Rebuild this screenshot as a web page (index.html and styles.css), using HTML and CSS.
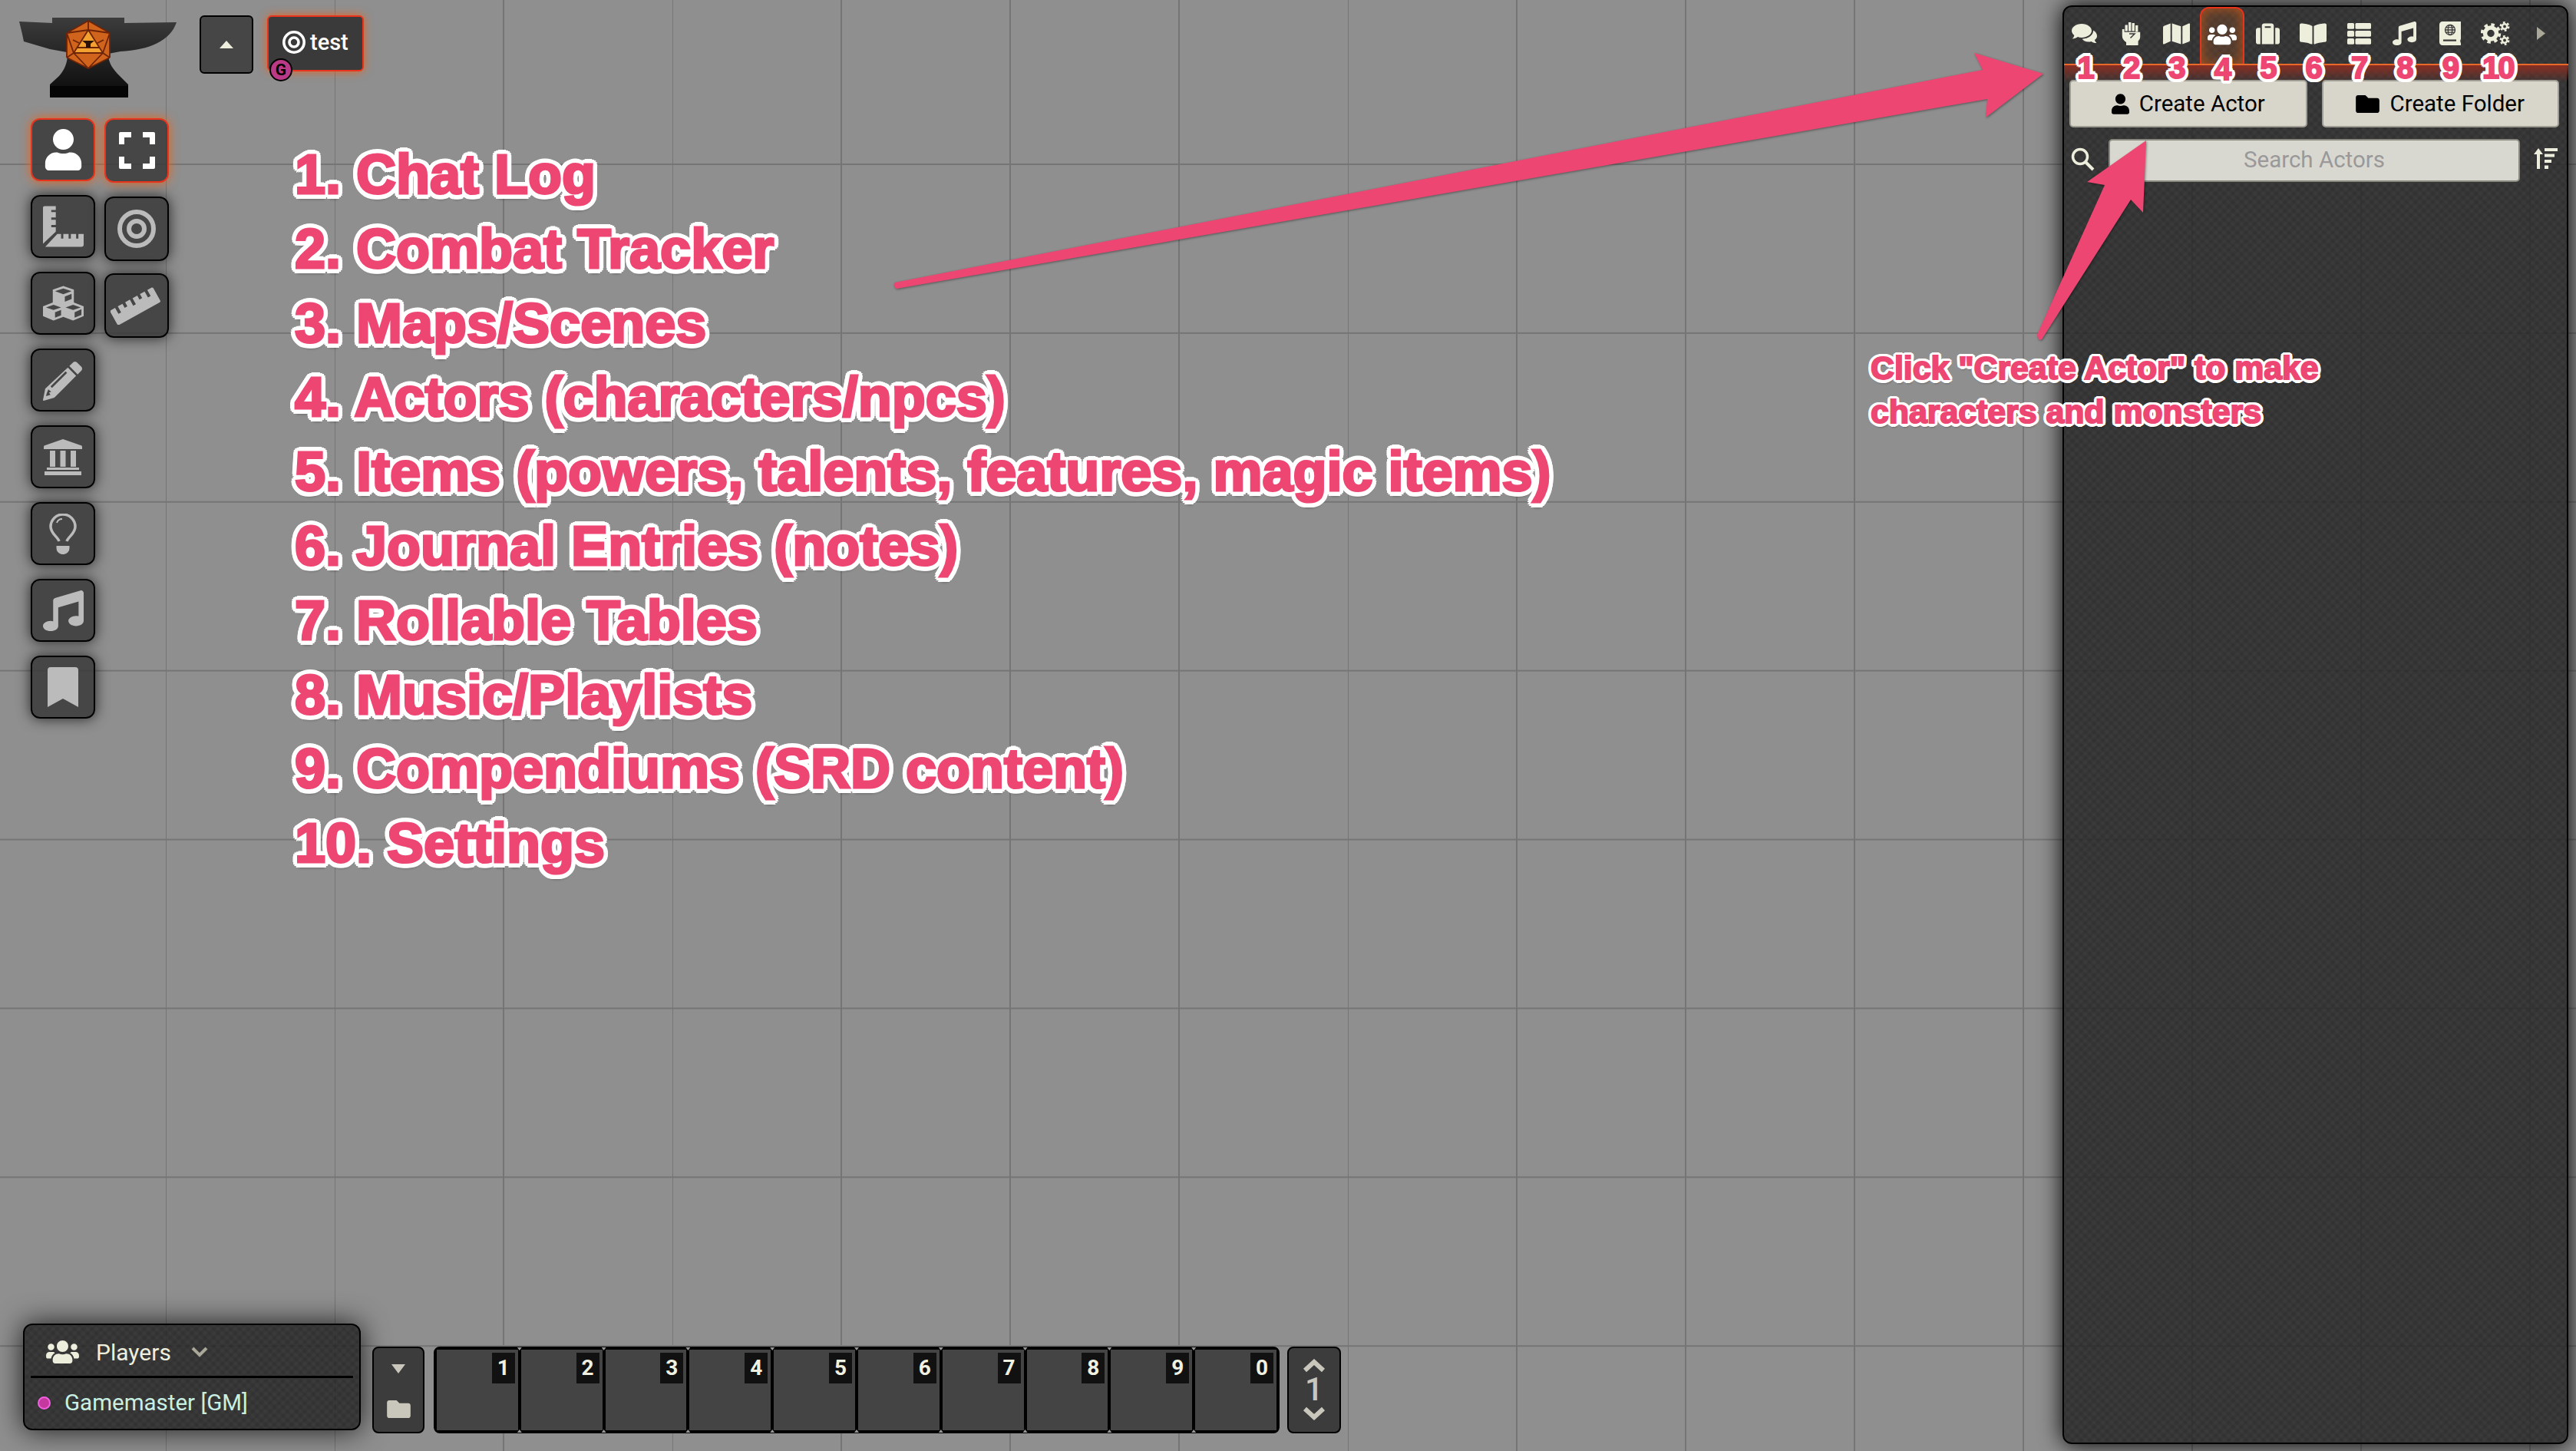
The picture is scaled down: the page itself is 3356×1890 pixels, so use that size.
FILE: index.html
```html
<!DOCTYPE html>
<html lang="en">

<head>
    <meta charset="UTF-8">
    <title>Foundry VTT - sidebar guide</title>
    <link rel="stylesheet" href="styles.css">
</head>

<body>

    <svg class="sprite" width="0" height="0">
        <symbol id="i-user" viewBox="0 0 448 512"><path d="M224 256c70.7 0 128-57.3 128-128S294.7 0 224 0 96 57.3 96 128s57.3 128 128 128zm89.6 32h-16.7c-22.2 10.2-46.9 16-72.9 16s-50.6-5.8-72.9-16h-16.7C60.2 288 0 348.2 0 422.4V464c0 26.5 21.5 48 48 48h352c26.5 0 48-21.5 48-48v-41.6c0-74.2-60.2-134.4-134.4-134.4z"/></symbol>
        <symbol id="i-folder" viewBox="0 64 512 384"><path d="M464 128H272l-64-64H48C21.49 64 0 85.49 0 112v288c0 26.51 21.49 48 48 48h416c26.51 0 48-21.49 48-48V176c0-26.51-21.49-48-48-48z"/></symbol>
        <symbol id="i-users" viewBox="0 32 640 448"><path d="M96 224c35.3 0 64-28.7 64-64s-28.7-64-64-64-64 28.7-64 64 28.7 64 64 64zm448 0c35.3 0 64-28.7 64-64s-28.7-64-64-64-64 28.7-64 64 28.7 64 64 64zm32 32h-64c-17.6 0-33.5 7.1-45.1 18.6 40.3 22.1 68.9 62 75.1 109.4h66c17.7 0 32-14.3 32-32v-32c0-35.3-28.7-64-64-64zm-256 0c61.9 0 112-50.1 112-112S381.9 32 320 32 208 82.1 208 144s50.1 112 112 112zm76.8 32h-8.3c-20.8 10-43.9 16-68.5 16s-47.6-6-68.5-16h-8.3C179.6 288 128 339.6 128 403.2V432c0 26.5 21.5 48 48 48h288c26.5 0 48-21.5 48-48v-28.8c0-63.6-51.6-115.2-115.2-115.2zm-223.7-13.4C161.5 263.1 145.6 256 128 256H64c-35.3 0-64 28.7-64 64v32c0 17.7 14.3 32 32 32h65.9c6.3-47.4 34.9-87.3 75.2-109.4z"/></symbol>
        <symbol id="i-music" viewBox="0 0 512 512"><path d="M470.38 1.51L150.41 96A32 32 0 0 0 128 126.51v261.41A139 139 0 0 0 96 384c-53 0-96 28.66-96 64s43 64 96 64 96-28.66 96-64V214.32l256-75v184.61a138.4 138.4 0 0 0-32-3.93c-53 0-96 28.66-96 64s43 64 96 64 96-28.65 96-64V32a32 32 0 0 0-41.62-30.49z"/></symbol>
        <symbol id="i-map" viewBox="0 32 576 448"><path d="M0 117.66v346.32c0 11.32 11.43 19.06 21.94 14.86L160 416V32L20.12 87.95A32.006 32.006 0 0 0 0 117.66zM192 416l192 64V96L192 32v384zM554.06 33.16L416 96v384l139.88-55.95A31.996 31.996 0 0 0 576 394.34V48.02c0-11.32-11.43-19.06-21.94-14.86z"/></symbol>
        <symbol id="i-suitcase" viewBox="0 32 512 448"><path d="M128 480h256V80c0-26.5-21.5-48-48-48H176c-26.5 0-48 21.5-48 48v400zm64-384h128v32H192V96zm320 80v256c0 26.5-21.5 48-48 48h-48V128h48c26.5 0 48 21.5 48 48zM96 480H48c-26.5 0-48-21.5-48-48V176c0-26.5 21.5-48 48-48h48v352z"/></symbol>
        <symbol id="i-book" viewBox="0 32 576 448"><path d="M542.22 32.05c-54.8 3.11-163.72 14.43-230.96 55.59-4.64 2.84-7.27 7.89-7.27 13.17v363.87c0 11.55 12.63 18.85 23.28 13.49 69.18-34.82 169.23-44.32 218.7-46.92 16.89-.89 30.02-14.43 30.02-30.66V62.75c.01-17.71-15.35-31.74-33.77-30.7zM264.73 87.64C197.5 46.48 88.58 35.17 33.78 32.05 15.36 31.01 0 45.04 0 62.75V400.6c0 16.24 13.13 29.78 30.02 30.66 49.49 2.6 149.59 12.11 218.77 46.95 10.62 5.35 23.21-1.94 23.21-13.46V100.63c0-5.29-2.62-10.14-7.27-12.99z"/></symbol>
        <symbol id="i-chat" viewBox="0 0 35 26">
            <path d="M13 0C6 0 0 4 0 9c0 2.400 1.300 4.500 3.300 6C3 17 1.800 18.500 .6 19.500c3 0 5.500-1 7.300-2.500 1.500.6 3.300.9 5.100.9 7 0 13-4 13-8.900S20 0 13 0z"/>
            <path d="M28 8.800c.3 6-6.500 10.700-14.400 10.900 1.500 2.300 4.700 3.800 8.400 3.800 1.300 0 2.500-.2 3.700-.6 1.700 1.400 3.900 2.200 6.700 2.100-1.200-1-2.100-2.400-2.500-3.900 2-1.400 3.100-3.200 3.100-5.200 0-3-1.800-5.500-4.800-7.100z"/>
        </symbol>
        <symbol id="i-fist" viewBox="0 0 25 31">
            <path d="M4.500 4.500h3.400v8H4.500zM9 1h3.400v11.500H9zM13.500 2h3.400v10.500h-3.400zM18 5h3.400v8.500H18z"/>
            <path d="M.8 10h2.800v3.800h20.600v6c0 2.500-1 4.200-2.600 5.700V31H6v-4C3 25 .8 22.500 .8 19z"/>
            <path d="M10 16h7l-5.500 5.500" fill="none" stroke="#383838" stroke-width="1.500"/>
        </symbol>
        <symbol id="i-list" viewBox="0 0 31 28">
            <rect x="0" y="0" width="9" height="7.800" rx="1.500"/><rect x="10.500" y="0" width="20.500" height="7.800" rx="1.500"/>
            <rect x="0" y="10" width="9" height="7.800" rx="1.500"/><rect x="10.500" y="10" width="20.500" height="7.800" rx="1.500"/>
            <rect x="0" y="20" width="9" height="7.800" rx="1.500"/><rect x="10.500" y="20" width="20.500" height="7.800" rx="1.500"/>
        </symbol>
        <symbol id="i-atlas" viewBox="0 0 28 31">
            <path d="M4 0h24v23c-1 .6-1 4 0 5v3H4c-2.200 0-4-1.800-4-4V4c0-2.200 1.800-4 4-4z"/>
            <g fill="none" stroke="#383838" stroke-width="1.300"><circle cx="14" cy="11" r="6.500"/><ellipse cx="14" cy="11" rx="2.700" ry="6.500"/><path d="M7.500 11h13M8.500 7.800h11M8.500 14.200h11"/></g>
            <rect x="5" y="23.500" width="17" height="2.200" fill="#383838"/>
        </symbol>
        <symbol id="i-cogs" viewBox="0 0 39 31">
            <g fill="none" stroke="currentColor">
                <circle cx="13" cy="15.500" r="7.500" stroke-width="5.500"/>
                <circle cx="13" cy="15.500" r="11" stroke-width="4.500" stroke-dasharray="4.320 4.320"/>
                <circle cx="31" cy="6.500" r="3.200" stroke-width="2.600"/>
                <circle cx="31" cy="6.500" r="5.300" stroke-width="2.400" stroke-dasharray="2.770 2.780"/>
                <circle cx="31" cy="24.500" r="3.200" stroke-width="2.600"/>
                <circle cx="31" cy="24.500" r="5.300" stroke-width="2.400" stroke-dasharray="2.770 2.780"/>
            </g>
        </symbol>
        <symbol id="i-bullseye" viewBox="0 0 50 50">
            <circle cx="25" cy="25" r="22" fill="none" stroke="currentColor" stroke-width="6"/>
            <circle cx="25" cy="25" r="10" fill="none" stroke="currentColor" stroke-width="6"/>
        </symbol>
        <symbol id="i-expand" viewBox="0 0 47 48">
            <path d="M0 2a2 2 0 0 1 2-2h14v7H7v9H0zM47 2a2 2 0 0 0-2-2H31v7h9v9h7zM0 46a2 2 0 0 0 2 2h14v-7H7v-9H0zM47 46a2 2 0 0 1-2 2H31v-7h9v-9h7z"/>
        </symbol>
        <symbol id="i-square" viewBox="0 0 54 54">
            <path d="M2 0h15v5h-6v3h6v7h-6v3h6v7h-6v3h6v6L0 50V2a2 2 0 0 1 2-2z"/>
            <path d="M19 37h5v6h3v-6h7v6h3v-6h7v6h3v-6h7v14a3 3 0 0 1-3 3H3z"/>
        </symbol>
        <symbol id="i-cubes" viewBox="0 0 54 46">
            <path d="M27 0l14 5v17l13 5v13l-14 6-13-5-13 5-14-6V27l13-5V5z"/>
            <g fill="#464646">
                <path d="M27 3.500L16 7l11 4 11-4zM29 14v7l9-3.500v-7zM14 25l-10 3.500 10 3.500 10-3.500zM40 25l-10 3.500 10 3.500 10-3.500zM16 35v7l8-3v-7zM42 35v7l9-3.500V31z"/>
            </g>
        </symbol>
        <symbol id="i-ruler" viewBox="0 0 68 50">
            <g transform="rotate(-29 34 25)"><path d="M2 14h6v9h4v-9h7v6h4v-6h7v9h4v-9h7v6h4v-6h7v9h4v-9h6a2 2 0 0 1 2 2v18a2 2 0 0 1-2 2H2a2 2 0 0 1-2-2V16a2 2 0 0 1 2-2z"/></g>
        </symbol>
        <symbol id="i-pencil" viewBox="0 0 54 54">
            <path d="M40 3a4 4 0 0 1 5 0l6 6a4 4 0 0 1 0 5l-5 5-11-11z"/>
            <path d="M33 10l11 11-29 29-14 4c-1 0-1-1-1-1l3-15zM30 15L10 35l2 2 20-20zM5 44l2-5 4 3-3 1 2 3-6 2z" fill-rule="evenodd"/>
        </symbol>
        <symbol id="i-landmark" viewBox="0 0 50 47">
            <path d="M25 0l23 8a2 2 0 0 1 2 2v3H0v-3a2 2 0 0 1 2-2z"/>
            <path d="M8 15h7v21H8zM21.500 15h7v21h-7zM35 15h7v21h-7zM4 37h42v3H4zM1 42h48v5H1z"/>
        </symbol>
        <symbol id="i-bulb" viewBox="0 0 36 53">
            <path d="M13 36C11 30 2 26 2 17a16 16 0 0 1 32 0c0 9-9 13-11 19" fill="none" stroke="currentColor" stroke-width="3.500"/>
            <path d="M17 7c-3 0-6 2-7 5" fill="none" stroke="currentColor" stroke-width="2"/>
            <path d="M9.500 42h17v3a8 8 0 0 1-7 8h-3a8 8 0 0 1-7-8z"/>
        </symbol>
        <symbol id="i-bookmark" viewBox="0 0 40 52">
            <path d="M4 0h32a4 4 0 0 1 4 4v48L20 41 0 52V4a4 4 0 0 1 4-4z"/>
        </symbol>
        <symbol id="i-sort" viewBox="0 0 31 27">
            <path d="M6 0l6 8H8v19H4V8H0zM14 0h17v4H14zM14 7.500h13v4H14zM14 15h9v4h-9zM14 22.500h5V27h-5z"/>
        </symbol>
    </svg>

    <svg class="logo" width="205" height="105" viewBox="0 0 205 105">
        <defs>
            <linearGradient id="anvil" x1="0" y1="0" x2="0" y2="1">
                <stop offset="0" stop-color="#3c3c3c"/>
                <stop offset="1" stop-color="#0a0a0a"/>
            </linearGradient>
        </defs>
        <path d="M0 6l43 2V1h94v7l68-1c-8 24-35 36-73 38l-16 3c0 12 6 20 15 29l11 11v17H40V88l12-11c7-8 11-17 11-29l-1-2L40 42 6 32C4 22 2 14 0 6z" fill="url(#anvil)"/>
        <rect x="40" y="90" width="102" height="15" fill="#050505"/>
        <path d="M90 5l28 16v32L90 67 62 53V21z" fill="#d0641c"/>
        <path d="M90 17l19 30H71z" fill="#f2a030"/>
        <path d="M90 5v12M62 21l9 26M118 21l-9 26M62 53l9-6M118 53l-9-6M90 67l-19-20M90 67l19-20M62 21l28-4 28 4M90 5L62 21M90 5l28 16M62 53l28 14 28-14M118 21v32M62 21v32M71 47l19-30 19 30zM76 40h28M70 30l8 4M110 30l-8 4" stroke="#6e2408" stroke-width="1.800" fill="none"/>
        <path d="M82 31h16l-5 4v5h-6v-5z" fill="#2c1206"/>
    </svg>

    <nav class="navigation">
        <button class="nav-toggle"><svg width="18" height="10" viewBox="0 0 18 10"><path d="M9 0l9 10H0z"/></svg></button>
        <div class="scene-tab">
            <svg class="scene-icon" width="30" height="30"><use href="#i-bullseye"/></svg>
            <span>test</span>
            <span class="gm-badge">G</span>
        </div>
    </nav>

    <aside class="controls">
        <div class="tool-col">
            <div class="tool active"><svg width="53" height="54"><use href="#i-user"/></svg></div>
            <div class="tool"><svg width="53" height="54"><use href="#i-square"/></svg></div>
            <div class="tool"><svg width="53" height="46"><use href="#i-cubes"/></svg></div>
            <div class="tool"><svg width="53" height="53"><use href="#i-pencil"/></svg></div>
            <div class="tool"><svg width="50" height="47"><use href="#i-landmark"/></svg></div>
            <div class="tool"><svg width="36" height="53"><use href="#i-bulb"/></svg></div>
            <div class="tool"><svg width="53" height="53"><use href="#i-music"/></svg></div>
            <div class="tool"><svg width="40" height="52"><use href="#i-bookmark"/></svg></div>
        </div>
        <div class="tool-col second">
            <div class="tool active"><svg width="47" height="48"><use href="#i-expand"/></svg></div>
            <div class="tool"><svg width="50" height="50"><use href="#i-bullseye"/></svg></div>
            <div class="tool"><svg width="68" height="50"><use href="#i-ruler"/></svg></div>
        </div>
    </aside>

    <section class="players">
        <h3 class="players-head">
            <svg class="users-icon" width="43" height="30"><use href="#i-users"/></svg>
            <span>Players</span>
            <svg class="chevron" width="22" height="14" viewBox="0 0 22 14"><path d="M2 2l9 9 9-9" fill="none" stroke="currentColor" stroke-width="4"/></svg>
        </h3>
        <div class="player">
            <span class="player-dot"></span>
            <span>Gamemaster [GM]</span>
        </div>
    </section>

    <section class="hotbar">
        <div class="macro-dir">
            <svg width="18" height="12" viewBox="0 0 18 12"><path d="M0 0h18l-9 12z"/></svg>
            <svg width="31" height="23"><use href="#i-folder"/></svg>
        </div>
        <ol class="macros">
            <li class="macro"><span class="macro-key">1</span></li>
            <li class="macro"><span class="macro-key">2</span></li>
            <li class="macro"><span class="macro-key">3</span></li>
            <li class="macro"><span class="macro-key">4</span></li>
            <li class="macro"><span class="macro-key">5</span></li>
            <li class="macro"><span class="macro-key">6</span></li>
            <li class="macro"><span class="macro-key">7</span></li>
            <li class="macro"><span class="macro-key">8</span></li>
            <li class="macro"><span class="macro-key">9</span></li>
            <li class="macro"><span class="macro-key">0</span></li>
        </ol>
        <div class="macro-page">
            <svg width="30" height="18" viewBox="0 0 30 18"><path d="M3 15L15 4l12 11" fill="none" stroke="currentColor" stroke-width="6"/></svg>
            <span>1</span>
            <svg width="30" height="18" viewBox="0 0 30 18"><path d="M3 3l12 11L27 3" fill="none" stroke="currentColor" stroke-width="6"/></svg>
        </div>
    </section>

    <aside class="sidebar">
        <nav class="tabs">
            <a class="tab"><svg width="35" height="26"><use href="#i-chat"/></svg><b class="tab-num">1</b></a>
            <a class="tab"><svg width="25" height="31"><use href="#i-fist"/></svg><b class="tab-num">2</b></a>
            <a class="tab"><svg width="35" height="28"><use href="#i-map"/></svg><b class="tab-num">3</b></a>
            <a class="tab active"><svg width="38" height="28"><use href="#i-users"/></svg><b class="tab-num">4</b></a>
            <a class="tab"><svg width="31" height="28"><use href="#i-suitcase"/></svg><b class="tab-num">5</b></a>
            <a class="tab"><svg width="35" height="28"><use href="#i-book"/></svg><b class="tab-num">6</b></a>
            <a class="tab"><svg width="31" height="28"><use href="#i-list"/></svg><b class="tab-num">7</b></a>
            <a class="tab"><svg width="31" height="31"><use href="#i-music"/></svg><b class="tab-num">8</b></a>
            <a class="tab"><svg width="28" height="31"><use href="#i-atlas"/></svg><b class="tab-num">9</b></a>
            <a class="tab"><svg width="39" height="31"><use href="#i-cogs"/></svg><b class="tab-num ten">10</b></a>
            <a class="tab collapse"><svg width="11" height="17" viewBox="0 0 11 17"><path d="M0 0l11 8.500L0 17z"/></svg></a>
        </nav>
        <div class="actions">
            <button class="action"><svg width="23" height="27"><use href="#i-user"/></svg>Create Actor</button>
            <button class="action"><svg width="31" height="23"><use href="#i-folder"/></svg>Create Folder</button>
        </div>
        <div class="search-row">
            <svg class="search-icon" width="32" height="32" viewBox="0 0 32 32"><circle cx="12" cy="12" r="9.500" fill="none" stroke="currentColor" stroke-width="3.500"/><path d="M19 19l10 10" stroke="currentColor" stroke-width="4"/></svg>
            <div class="search-box">Search Actors</div>
            <svg class="sort-icon" width="31" height="27"><use href="#i-sort"/></svg>
        </div>
    </aside>

    <!-- annotations drawn on top of the screenshot -->
    <svg class="arrows" width="3356" height="1890" viewBox="0 0 3356 1890">
        <path d="M1166 368L2583 91 2572 69 2662 96 2587 153 2589 129 1168 376Q1162 372 1166 368z"/>
        <path d="M2654 436L2742 241 2719 237 2796 183 2792 277 2776 260 2660 442Q2655 445 2654 436z"/>
    </svg>

    <ul class="guide">
        <li>1. Chat Log</li>
        <li>2. Combat Tracker</li>
        <li>3. Maps/Scenes</li>
        <li>4. Actors (characters/npcs)</li>
        <li>5. Items (powers, talents, features, magic items)</li>
        <li>6. Journal Entries (notes)</li>
        <li>7. Rollable Tables</li>
        <li>8. Music/Playlists</li>
        <li>9. Compendiums (SRD content)</li>
        <li>10. Settings</li>
    </ul>

    <p class="callout">Click "Create Actor" to make<br>characters and monsters</p>

</body>

</html>
```

FILE: styles.css
```css
* {
    box-sizing: border-box;
}

body {
    margin: 0;
    width: 3356px;
    height: 1890px;
    position: relative;
    overflow: hidden;
    font-family: Roboto, "Noto Sans", sans-serif;
    background-color: #8f8f8f;
    background-image:
        linear-gradient(#757575 2px, transparent 2px),
        linear-gradient(90deg, #757575 2px, transparent 2px);
    background-size: 220px 219.9px;
    background-position: 215px 213px;
}

svg {
    fill: currentColor;
    display: block;
}

.sprite {
    position: absolute;
}

.logo {
    position: absolute;
    left: 25px;
    top: 22px;
    filter: blur(0.5px);
}

/* top nav */
.navigation {
    position: absolute;
    left: 260px;
    top: 20px;
    display: flex;
    align-items: flex-start;
    gap: 18px;
}

.nav-toggle {
    width: 70px;
    height: 76px;
    padding: 0;
    display: flex;
    align-items: center;
    justify-content: center;
    background: #464646;
    border: 2px solid #000;
    border-radius: 6px;
    color: #eeeedd;
}

.scene-tab {
    position: relative;
    width: 126px;
    height: 73px;
    display: flex;
    align-items: center;
    gap: 6px;
    padding: 0 0 4px 18px;
    background: #3a3a3a;
    border: 2px solid #e8341c;
    border-radius: 6px;
    box-shadow: 0 0 12px #e8641c;
    color: #fff;
    font-size: 29px;
    font-weight: 500;
}

.gm-badge {
    position: absolute;
    left: 1px;
    top: 54px;
    width: 30px;
    height: 30px;
    border-radius: 50%;
    border: 2px solid #000;
    background: #bb3a88;
    color: #000;
    font-size: 21px;
    font-weight: 700;
    line-height: 26px;
    text-align: center;
}

/* left tools */
.controls {
    position: absolute;
    left: 40px;
    top: 154px;
    display: flex;
    gap: 12px;
}

.tool-col {
    display: flex;
    flex-direction: column;
    gap: 18px;
}

.tool {
    width: 84px;
    height: 82px;
    display: flex;
    align-items: center;
    justify-content: center;
    background: rgba(58, 58, 58, 0.85);
    border: 2px solid #000;
    border-radius: 12px;
    box-shadow: 0 0 18px rgba(0, 0, 0, 0.75);
    color: #bbb;
}

.tool.active {
    border-color: #e8341c;
    box-shadow: 0 0 14px #e8641c;
    color: #fff;
}

.second {
    gap: 16px;
}

.second .tool {
    height: 84px;
}

.second .tool.active {
    margin-bottom: 2px;
}

/* players */
.players {
    position: absolute;
    left: 30px;
    top: 1724px;
    width: 440px;
    height: 139px;
    padding: 0 8px;
    background-color: rgba(44, 44, 44, 0.85);
    background-image:
        repeating-linear-gradient(45deg, rgba(0, 0, 0, 0.07) 0 4px, transparent 4px 8px),
        repeating-linear-gradient(-45deg, rgba(0, 0, 0, 0.07) 0 4px, transparent 4px 8px);
    border: 2px solid #000;
    border-radius: 12px;
    box-shadow: 0 0 36px rgba(0, 0, 0, 0.8);
}

.players-head {
    margin: 0;
    height: 69px;
    display: flex;
    align-items: center;
    padding: 4px 0 0 20px;
    border-bottom: 3px solid #000;
    color: #eeeedd;
    font-size: 30px;
    font-weight: 400;
}

.users-icon {
    margin-right: 22px;
}

.chevron {
    margin-left: 26px;
    color: #aaa898;
}

.player {
    height: 64px;
    display: flex;
    align-items: center;
    gap: 18px;
    padding-left: 9px;
    color: #c8efe2;
    font-size: 29.500px;
}

.player-dot {
    width: 17px;
    height: 17px;
    border-radius: 50%;
    background: #c5399e;
    border: 2px solid #f060e0;
}

/* hotbar */
.hotbar {
    position: absolute;
    left: 485px;
    top: 1754px;
    height: 113px;
    display: flex;
    gap: 12px;
}

.macro-dir {
    width: 68px;
    display: flex;
    flex-direction: column;
    align-items: center;
    gap: 35px;
    padding-top: 21px;
    background: #3c3c3c;
    border: 2px solid #000;
    border-radius: 8px;
    color: #c9c7bc;
}

.macros {
    margin: 0;
    padding: 0;
    list-style: none;
    width: 1102px;
    display: flex;
    background: #000;
    border: 4px solid #000;
    border-radius: 8px;
}

.macro {
    position: relative;
    flex: 1;
    background: rgba(70, 70, 70, 0.97);
    border-right: 4px solid #000;
}

.macro:last-child {
    border-right: 0;
}

.macro:not(:last-child)::before,
.macro:not(:last-child)::after {
    content: "";
    position: absolute;
    right: -5px;
    width: 6px;
    height: 4px;
    background: #999;
}

.macro:not(:last-child)::before {
    top: -3px;
    clip-path: polygon(0 0, 100% 0, 50% 100%);
}

.macro:not(:last-child)::after {
    bottom: -3px;
    clip-path: polygon(50% 0, 100% 100%, 0 100%);
}

.macro-key {
    position: absolute;
    top: 4px;
    right: 4px;
    width: 30px;
    height: 40px;
    background: #111;
    color: #f0f0e0;
    font-size: 28px;
    font-weight: 700;
    line-height: 40px;
    text-align: center;
}

.macro-page {
    width: 70px;
    margin-left: -2px;
    display: flex;
    flex-direction: column;
    align-items: center;
    padding-top: 14px;
    background: #3c3c3c;
    border: 2px solid #000;
    border-radius: 8px;
    color: #c9c7bc;
}

.macro-page span {
    font-size: 42px;
    font-weight: 500;
    line-height: 44px;
}

/* sidebar */
.sidebar {
    position: absolute;
    left: 2687px;
    top: 7px;
    width: 659px;
    height: 1874px;
    background-color: rgba(44, 44, 44, 0.85);
    background-image:
        repeating-linear-gradient(45deg, rgba(0, 0, 0, 0.07) 0 4px, transparent 4px 8px),
        repeating-linear-gradient(-45deg, rgba(0, 0, 0, 0.07) 0 4px, transparent 4px 8px);
    border: 2px solid #000;
    border-radius: 12px;
    box-shadow: 0 0 30px #000;
}

.tabs {
    position: relative;
    height: 76px;
    margin-left: -2px;
    display: grid;
    grid-template-columns: repeat(11, 59.4px);
    color: #eeeedd;
}

.tabs::after {
    content: "";
    position: absolute;
    left: 2px;
    right: -2px;
    top: 74px;
    height: 22px;
    border-top: 2px solid #e8692a;
    background: linear-gradient(#8a2e22, rgba(138, 46, 34, 0));
}

.tab {
    position: relative;
    display: flex;
    align-items: center;
    justify-content: center;
    padding-bottom: 7px;
}

.tab.active {
    color: #fff;
    margin: 0 1px;
    border: 2px solid #e8341c;
    border-bottom: 0;
    border-radius: 12px 12px 0 0;
    box-shadow: inset 0 0 16px #b8561c;
    background: rgba(170, 85, 30, 0.25);
}

.tab.collapse {
    color: #aaa898;
}

.tab-num {
    position: absolute;
    top: 56px;
    left: 50%;
    transform: translateX(-50%);
    z-index: 2;
    color: #ee4672;
    font: 700 40px/46px "Liberation Sans", sans-serif;
    letter-spacing: -2px;
    -webkit-text-stroke: 2px #ee4672;
    text-shadow:
        5px 0 #fff, 4.600px 1.900px #fff, 3.500px 3.500px #fff, 1.900px 4.600px #fff,
        0 5px #fff, -1.900px 4.600px #fff, -3.500px 3.500px #fff, -4.600px 1.900px #fff,
        -5px 0 #fff, -4.600px -1.900px #fff, -3.500px -3.500px #fff, -1.900px -4.600px #fff,
        0 -5px #fff, 1.900px -4.600px #fff, 3.500px -3.500px #fff, 4.600px -1.900px #fff;
}

.tab-num.ten {
    margin-left: 3px;
}

.actions {
    position: relative;
    z-index: 1;
    display: flex;
    gap: 19px;
    padding: 19px 10px 0 7px;
}

.action {
    flex: 1;
    height: 62px;
    padding: 0;
    display: flex;
    align-items: center;
    justify-content: center;
    gap: 13px;
    background: #d8d6cb;
    border: 2px solid #9f9d93;
    border-radius: 5px;
    color: #000;
    font-family: Roboto, sans-serif;
    font-size: 29.500px;
}

.search-row {
    display: flex;
    align-items: center;
    height: 56px;
    margin-top: 15px;
    color: #eeeedd;
}

.search-icon {
    margin: -3px 0 0 9px;
}

.search-box {
    width: 536px;
    height: 56px;
    margin-left: 17px;
    background: #d9d8d0;
    border: 2px solid #8a8980;
    border-radius: 5px;
    color: #999;
    font-size: 29.500px;
    line-height: 50px;
    text-align: center;
}

.sort-icon {
    margin: -6px 0 0 18px;
}

/* annotations */
.arrows {
    position: absolute;
    left: 0;
    top: 0;
    z-index: 3;
    fill: #ee4672;
    filter: drop-shadow(1px 1px 1.500px rgba(0, 0, 0, 0.4));
}

.guide {
    position: absolute;
    left: 384px;
    top: 179px;
    z-index: 3;
    margin: 0;
    padding: 0;
    list-style: none;
    color: #ee4672;
    font: 700 72px/96.800px "Liberation Sans", Arial, sans-serif;
    white-space: nowrap;
    -webkit-text-stroke: 3px #ee4672;
    text-shadow:
        7px 0 #fff, 6.500px 2.700px #fff, 5px 5px #fff, 2.700px 6.500px #fff,
        0 7px #fff, -2.700px 6.500px #fff, -5px 5px #fff, -6.500px 2.700px #fff,
        -7px 0 #fff, -6.500px -2.700px #fff, -5px -5px #fff, -2.700px -6.500px #fff,
        0 -7px #fff, 2.700px -6.500px #fff, 5px -5px #fff, 6.500px -2.700px #fff,
        1px 8px 3px rgba(0, 0, 0, 0.25);
}

.callout {
    position: absolute;
    left: 2437px;
    top: 451px;
    z-index: 3;
    margin: 0;
    color: #ee4672;
    font: 700 42.800px/57px "Liberation Sans", Arial, sans-serif;
    white-space: nowrap;
    -webkit-text-stroke: 2px #ee4672;
    text-shadow:
        4.500px 0 #fff, 4.200px 1.700px #fff, 3.200px 3.200px #fff, 1.700px 4.200px #fff,
        0 4.500px #fff, -1.700px 4.200px #fff, -3.200px 3.200px #fff, -4.200px 1.700px #fff,
        -4.500px 0 #fff, -4.200px -1.700px #fff, -3.200px -3.200px #fff, -1.700px -4.200px #fff,
        0 -4.500px #fff, 1.700px -4.200px #fff, 3.200px -3.200px #fff, 4.200px -1.700px #fff,
        1px 6px 2px rgba(0, 0, 0, 0.25);
}
```
